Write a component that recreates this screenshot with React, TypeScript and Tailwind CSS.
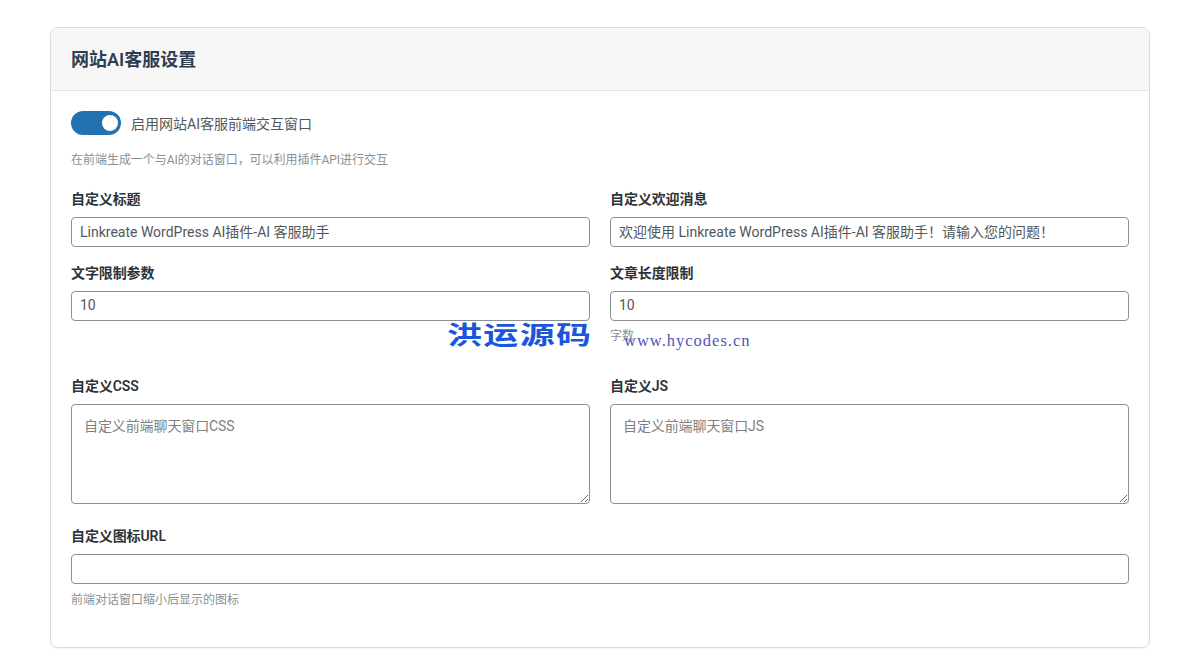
function Label({ children }: { children: React.ReactNode }) {
  return <label className="block h-[18px] mb-[9px] text-[14px] leading-[18px] font-semibold tracking-[-0.1px] text-[#2c3338]">{children}</label>;
}
function Field({ label, value }: { label: string; value: string }) {
  return (
    <div>
      <Label>{label}</Label>
      <input readOnly defaultValue={value} className="block w-full h-[30px] px-2 pb-[2px] text-[14px] text-[#50575e] bg-white border border-[#8c8f94] rounded-[4px] outline-none" />
    </div>
  );
}
function Area({ label, placeholder }: { label: string; placeholder: string }) {
  return (
    <div>
      <Label>{label}</Label>
      <textarea readOnly placeholder={placeholder} className="block w-full h-[100px] px-3 py-3 text-[14px] leading-[18px] tracking-[-0.1px] bg-white border border-[#8c8f94] rounded-[4px] outline-none placeholder:text-[#808080]" />
    </div>
  );
}
export default function App() {
  return (
    <div className="relative min-h-[670px] bg-white px-[50px] pt-[27px] font-['Roboto','Noto_Sans_CJK_SC',sans-serif]">
      <div className="border border-[#dcdcde] rounded-[8px] overflow-hidden h-[621px] shadow-[0_1px_2px_rgba(0,0,0,0.05)]">
        <div className="h-[63px] bg-[#f7f7f7] border-b border-[#e2e4e7] px-5 flex items-center">
          <h2 className="text-[18px] font-semibold text-[#2c3e50]">网站AI客服设置</h2>
        </div>
        <div className="px-5 pt-5">
          <div className="flex items-center gap-[10px] h-6">
            <div className="w-[50px] h-6 rounded-full bg-[#2271b1] flex items-center justify-end pr-[3px]">
              <span className="w-4 h-4 rounded-full bg-white" />
            </div>
            <span className="text-[14px] leading-[24px] pt-[1px] text-[#50575e]">启用网站AI客服前端交互窗口</span>
          </div>
          <p className="mt-[16px] h-[18px] text-[12px] leading-[18px] tracking-[-0.03px] text-[#8a8f94]">在前端生成一个与AI的对话窗口，可以利用插件API进行交互</p>
          <div className="mt-[21px] grid grid-cols-2 gap-x-5">
            <Field label="自定义标题" value="Linkreate WordPress AI插件-AI 客服助手" />
            <Field label="自定义欢迎消息" value="欢迎使用 Linkreate WordPress AI插件-AI 客服助手！请输入您的问题！" />
          </div>
          <div className="mt-[17px] grid grid-cols-2 gap-x-5">
            <Field label="文字限制参数" value="10" />
            <div>
              <Field label="文章长度限制" value="10" />
              <p className="mt-[6px] h-[18px] text-[12px] leading-[18px] text-[#8a8f94]">字数</p>
            </div>
          </div>
          <div className="mt-[32px] grid grid-cols-2 gap-x-5">
            <Area label="自定义CSS" placeholder="自定义前端聊天窗口CSS" />
            <Area label="自定义JS" placeholder="自定义前端聊天窗口JS" />
          </div>
          <div className="mt-[23px]">
            <Field label="自定义图标URL" value="" />
            <p className="mt-[7px] h-[18px] text-[12px] leading-[18px] text-[#8a8f94]">前端对话窗口缩小后显示的图标</p>
          </div>
        </div>
      </div>
      <div className="absolute left-[447px] top-[318px] w-[144px] flex justify-between text-[35px] leading-[30px] font-semibold text-[#1a56db] scale-y-[0.7] font-['Noto_Sans_CJK_SC',sans-serif]">
        <span>洪</span><span>运</span><span>源</span><span>码</span>
      </div>
      <div className="absolute left-[624px] top-[331px] text-[16.5px] leading-[20px] tracking-[1px] text-[#4f54b8] font-['Liberation_Serif',serif]">www.hycodes.cn</div>
    </div>
  );
}
